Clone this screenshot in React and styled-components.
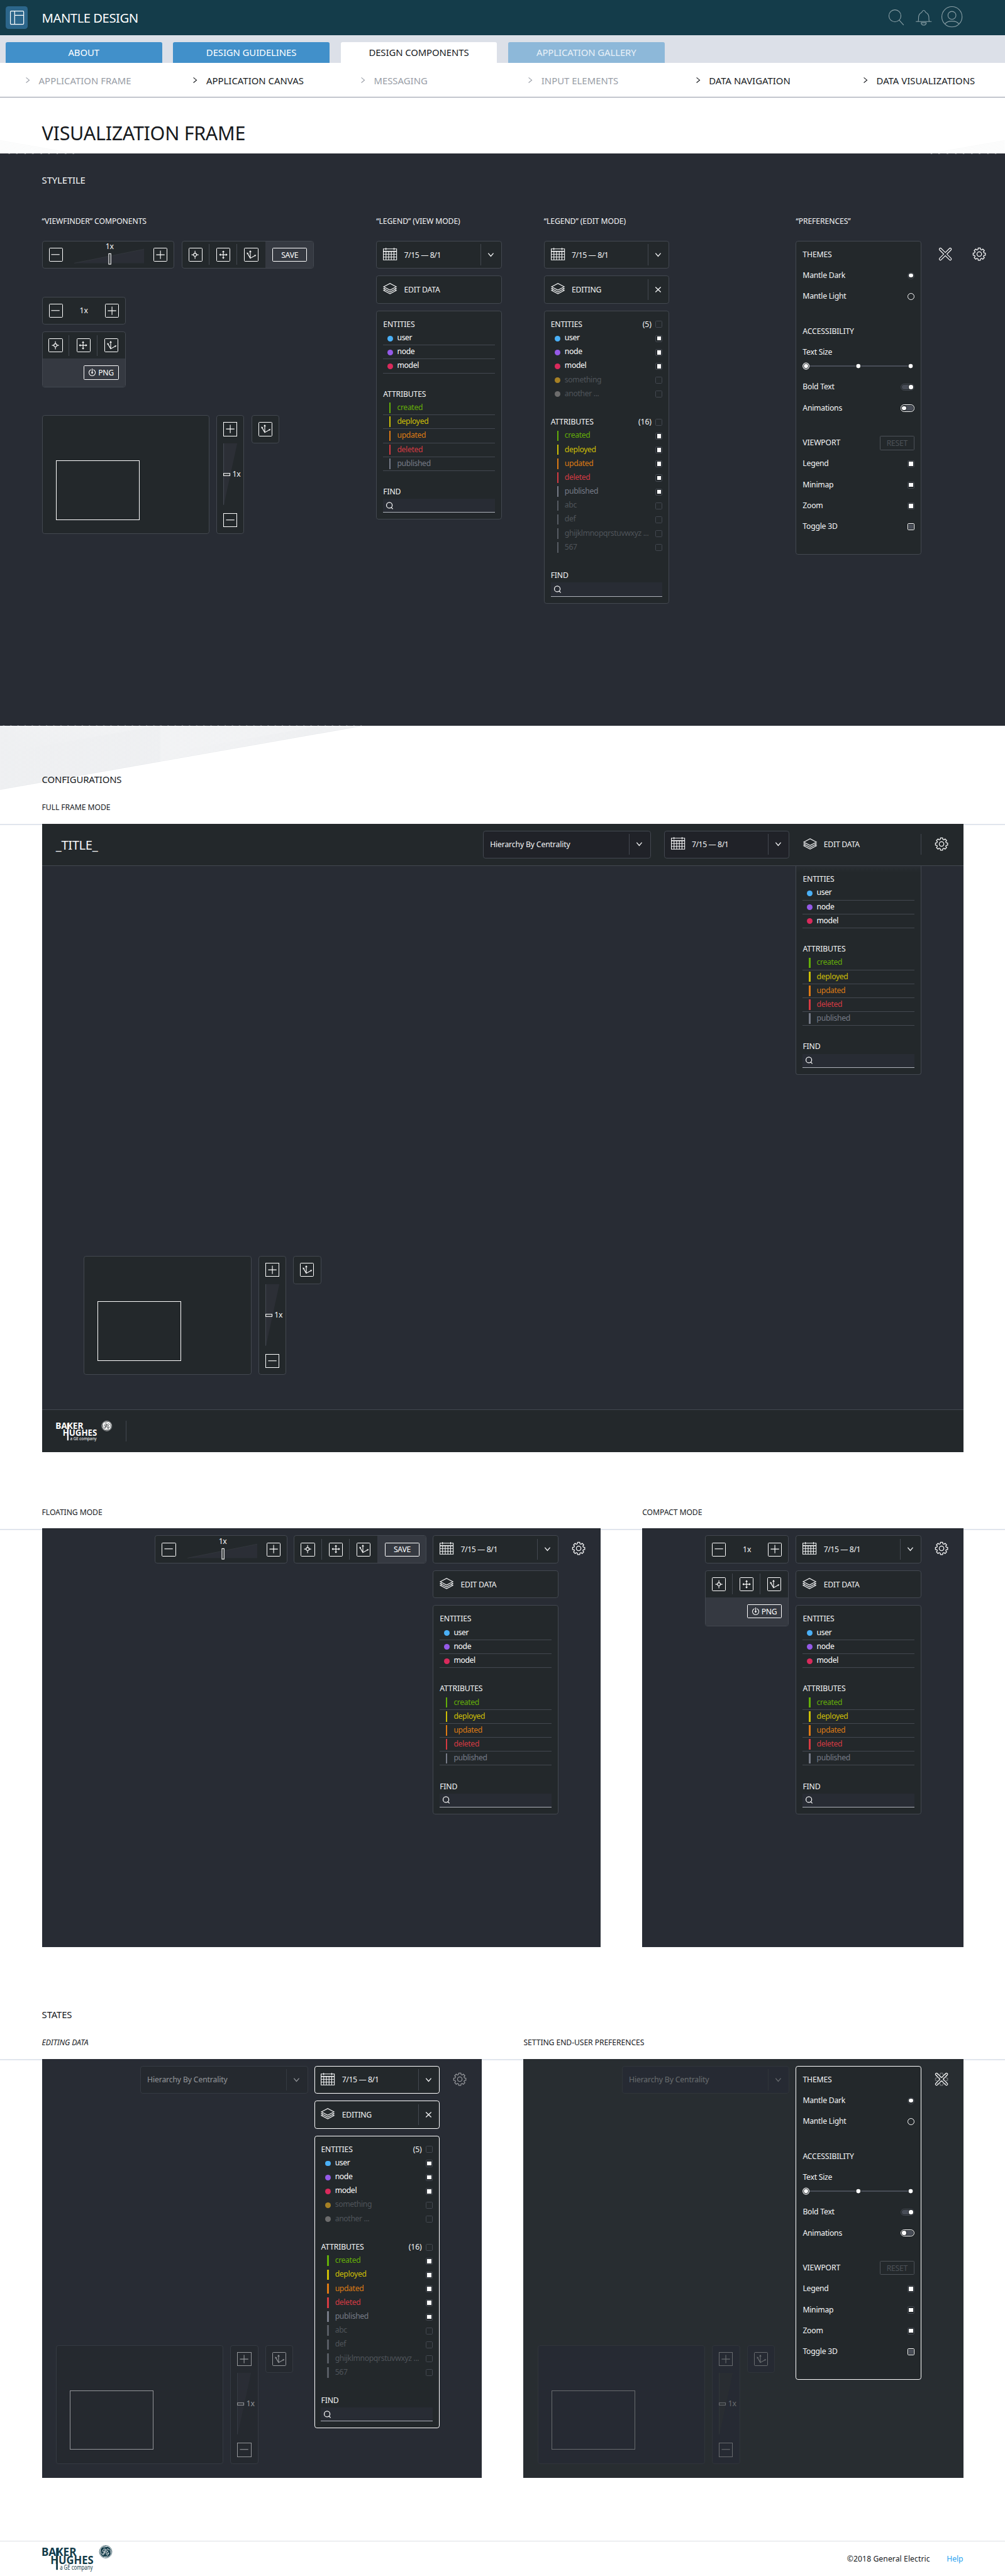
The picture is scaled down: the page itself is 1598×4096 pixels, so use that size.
import React from "react";
import styled, { createGlobalStyle, css } from "styled-components";

/* 1rem is ten units of the 1440-wide layout grid. */
const GlobalStyle = createGlobalStyle`
  html { font-size: 11.1px; }
  body {
    margin: 0;
    overflow-x: hidden;
    background: #fff;
    color: #16191d;
    font-family: "Noto Sans", "Open Sans", sans-serif;
    -webkit-font-smoothing: antialiased;
  }
  *, *::before, *::after { box-sizing: border-box; }
  svg { display: block; overflow: visible; flex: none; }
`;

const CANVAS = "#282c34";
const PANEL = "#23282b";
const LINE = "#434850";
const SLATE = "#484d57";

/* ---------- icons ---------- */

const Icon = styled.svg.attrs((p) => ({
  fill: "none",
  stroke: "currentColor",
  strokeWidth: p.strokeWidth || 1,
}))`
  width: ${(p) => p.$w / 10}rem;
  height: ${(p) => (p.$h || p.$w) / 10}rem;
`;

const gearPath = (() => {
  const points = [];
  const ring = [[-15, 6.9], [-10.5, 8.9], [10.5, 8.9], [15, 6.9]];
  for (let tooth = 0; tooth < 8; tooth += 1) {
    ring.forEach(([offset, radius]) => {
      const angle = ((tooth * 45 + offset) * Math.PI) / 180;
      points.push(`${(10 + radius * Math.sin(angle)).toFixed(2)} ${(10 - radius * Math.cos(angle)).toFixed(2)}`);
    });
  }
  return `M${points.join("L")}Z`;
})();

const Gear = () => (
  <Icon $w={20} viewBox="0 0 20 20" strokeLinejoin="round" strokeWidth="1.1">
    <path d={gearPath} />
    <circle cx="10" cy="10" r="3.3" />
  </Icon>
);

const BigCross = () => (
  <Icon $w={20} viewBox="-10 -10 20 20">
    <path
      transform="rotate(45)"
      d="M-1.6 -1.6V-10A1.6 1.6 0 0 1 1.6 -10V-1.6H10A1.6 1.6 0 0 1 10 1.6H1.6V10A1.6 1.6 0 0 1 -1.6 10V1.6H-10A1.6 1.6 0 0 1 -10 -1.6Z"
    />
  </Icon>
);

const Calendar = () => (
  <Icon $w={20} $h={18} viewBox="0 0 20 18">
    <path d="M.5 1.6H19.5V17.4H.5ZM4.2 0V3.4M15.8 0V3.4M.5 9.3H19.5M.5 13.3H19.5M4.3 5.3V17.4M8.1 5.3V17.4M11.9 5.3V17.4M15.7 5.3V17.4" />
    <path d="M.5 5.2H19.5" strokeWidth="1.5" />
  </Icon>
);

const Layers = () => (
  <Icon $w={20} $h={16} viewBox="0 0 20 16">
    <path d="M.9 5.4L10 .6L19.1 5.4L10 10.2ZM3.6 6.8L.9 8.1L10 12.9L19.1 8.1L16.4 6.8M3.6 9.4L.9 10.6L10 15.4L19.1 10.6L16.4 9.4" />
  </Icon>
);

const Chevron = () => (
  <Icon $w={8} $h={6} viewBox="0 0 8 6" strokeWidth="1.2"><path d="M.3 .5L4 5L7.7 .5" /></Icon>
);

const Cross = () => (
  <Icon $w={8} viewBox="0 0 8 8" strokeWidth="1.2"><path d="M.2 .4L7.8 7.6M7.8 .4L.2 7.6" /></Icon>
);

const Magnifier = () => (
  <Icon $w={10} $h={11} viewBox="0 0 10 11" strokeWidth="1.1">
    <circle cx="4.6" cy="4.9" r="4.1" />
    <path d="M6.9 7.6L9.6 10.2" />
  </Icon>
);

const glyphs = {
  plus: <path d="M4 10H16M10 4V16" />,
  minus: <path d="M4 9.7H16" />,
  target: <><circle cx="10" cy="10" r="2.2" /><path d="M10 4.2V7.8M10 12.2V15.8M5 10H7.8M12.2 10H15" /></>,
  pan: (
    <>
      <path d="M10 5V15M5 10H15" />
      <path fill="currentColor" stroke="none" d="M10 4L11.8 6.2H8.2ZM10 16L11.8 13.8H8.2ZM4 10L6.2 8.2V11.8ZM16 10L13.8 8.2V11.8Z" />
    </>
  ),
  axes: (
    <>
      <path d="M9 5V15L16 11M9 15L5 8" />
      <path fill="currentColor" stroke="none" d="M9 3.7L10.8 6H7.2ZM17.4 10.1L16.1 12.6L14.6 10.3ZM4.1 6.6L6.7 7.8L4.2 9.4Z" />
    </>
  ),
};

/* ---------- shared controls ---------- */

const Box = styled.span`
  display: block;
  width: 2rem;
  height: 2rem;
  flex: none;
  border: 0.1rem solid #fff;
  border-radius: ${(p) => (p.$square ? 0 : "0.15rem")};
  color: #fff;
`;

const BoxGlyph = styled(Icon)`margin: -0.1rem;`;

const BoxButton = ({ glyph, square }) => (
  <Box $square={square}><BoxGlyph $w={20} viewBox="0 0 20 20">{glyphs[glyph]}</BoxGlyph></Box>
);

const Panel = styled.div`
  border: 0.1rem solid ${(p) => (p.$active ? "#fff" : LINE)};
  border-radius: 0.35rem;
  background: ${(p) => (p.$active ? PANEL : p.$inset ? "#202228" : `var(--panel, ${PANEL})`)};
  color: #f5f6f7;
  font-size: 1.1rem;
`;

const Bar = styled(Panel)`
  display: flex;
  align-items: center;
  width: ${(p) => p.$w / 10}rem;
  height: 4rem;
  flex: none;
`;

const ZoomBar = styled(Bar)`padding: 0 0.9rem; justify-content: space-between;`;

const Track = styled.div`
  position: relative;
  margin: 0 1.4rem 0 1.6rem;
`;

const TrackLabel = styled.span`
  position: absolute;
  left: 0;
  right: -0.2rem;
  top: -0.8rem;
  line-height: 1.2rem;
  text-align: center;
  letter-spacing: -0.02em;
`;

const WideZoom = () => (
  <ZoomBar $w={190}>
    <BoxButton glyph="minus" />
    <Track>
      <TrackLabel>1x</TrackLabel>
      <Icon $w={100} $h={20} viewBox="0 0 100 20">
        <path d="M0 22L100 2V22Z" fill="#2b2e36" stroke="none" />
        <path d="M0 22L100 2" stroke="#383d42" strokeWidth="0.6" />
        <rect x="49.5" y="8.5" width="3" height="15" fill={PANEL} stroke="#fff" />
      </Icon>
    </Track>
    <BoxButton glyph="plus" />
  </ZoomBar>
);

const SmallZoom = () => (
  <ZoomBar $w={120}>
    <BoxButton glyph="minus" />
    <span>1x</span>
    <BoxButton glyph="plus" />
  </ZoomBar>
);

const ToolCells = styled.div`
  display: flex;
  height: 3.8rem;
  margin-left: -0.1rem;
`;

const ToolCell = styled.div`
  display: flex;
  align-items: center;
  justify-content: center;
  width: 4rem;
  ${(p) => !p.$last && css`
    background: linear-gradient(${LINE}, ${LINE}) right center / 0.1rem 3rem no-repeat;
  `}
`;

const Tools = () => (
  <ToolCells>
    <ToolCell><BoxButton glyph="target" /></ToolCell>
    <ToolCell><BoxButton glyph="pan" /></ToolCell>
    <ToolCell $last><BoxButton glyph="axes" /></ToolCell>
  </ToolCells>
);

const ExportTray = styled.div`
  display: flex;
  flex: 1;
  align-items: center;
  justify-content: flex-end;
  height: ${(p) => (p.$tall ? "4rem" : "100%")};
  padding-right: 0.9rem;
  background: #353941;
`;

const OutlineButton = styled.span`
  display: flex;
  align-items: center;
  justify-content: center;
  gap: 0.35rem;
  width: 5rem;
  height: 2rem;
  border: 0.1rem solid ${(p) => (p.$muted ? "#4d5258" : "#fff")};
  border-radius: 0.15rem;
  color: ${(p) => (p.$muted ? "#4d5258" : "#fff")};
  letter-spacing: -0.02em;
`;

const ToolBar = styled(Bar)`overflow: hidden;`;
const ToolStack = styled(Panel)`
  width: 12rem;
  height: 8rem;
  overflow: hidden;
`;

const WideTools = () => (
  <ToolBar $w={190}>
    <Tools />
    <ExportTray><OutlineButton>SAVE</OutlineButton></ExportTray>
  </ToolBar>
);

const SmallTools = () => (
  <ToolStack>
    <Tools />
    <ExportTray $tall>
      <OutlineButton>
        <Icon $w={10} $h={11} viewBox="0 0 10 11">
          <path d="M3.4 1.5A4.6 4.6 0 1 0 6.6 1.5M5 0V6" />
          <path d="M3.2 5.2H6.8L5 7.8Z" fill="currentColor" stroke="none" />
        </Icon>
        PNG
      </OutlineButton>
    </ExportTray>
  </ToolStack>
);

/* ---------- minimap ---------- */

const Navigator = styled.div`
  display: flex;
  align-items: flex-start;
  gap: 1rem;
`;

const Minimap = styled(Panel)`
  width: 24rem;
  height: 17rem;
  padding: 6.4rem 0 0 1.9rem;
`;

const Viewport = styled.div`
  width: 12rem;
  height: 8.5rem;
  border: 0.1rem solid #fff;
`;

const ZoomColumn = styled(Panel)`
  display: flex;
  flex-direction: column;
  align-items: center;
  justify-content: space-between;
  width: 4rem;
  height: 17rem;
  padding: 0.9rem 0;
`;

const ColumnTrack = styled.div`position: relative;`;
const ColumnLabel = styled.span`
  position: absolute;
  left: 1.3rem;
  top: 3.6rem;
  line-height: 1.6rem;
  letter-spacing: -0.02em;
`;

const AxesPanel = styled(Panel)`
  display: grid;
  place-items: center;
  width: 4rem;
  height: 4rem;
`;

const MapControls = () => (
  <Navigator>
    <Minimap><Viewport /></Minimap>
    <ZoomColumn>
      <BoxButton glyph="plus" square />
      <ColumnTrack>
        <Icon $w={20} $h={90} viewBox="0 0 20 90">
          <path d="M0 0H20L.5 90Z" fill="#2c2f36" stroke="none" />
          <path d="M.5 0V88" stroke={LINE} />
          <rect x=".5" y="43" width="9" height="3.2" fill={PANEL} stroke="#fff" />
        </Icon>
        <ColumnLabel>1x</ColumnLabel>
      </ColumnTrack>
      <BoxButton glyph="minus" square />
    </ZoomColumn>
    <AxesPanel><BoxButton glyph="axes" /></AxesPanel>
  </Navigator>
);

/* ---------- drop-downs and legend ---------- */

const BarText = styled.span`
  flex: 1;
  padding-left: ${(p) => (p.$plain ? 0 : "1rem")};
  letter-spacing: ${(p) => p.$track || "-0.02em"};
  white-space: nowrap;
`;

const BarEnd = styled.span`
  display: grid;
  place-items: center;
  width: 3rem;
  height: 3rem;
  padding-right: 0.1rem;
  border-left: 0.1rem solid ${LINE};
`;

const DropBar = styled(Bar)`padding-left: 0.9rem;`;

const IconNudge = styled.span`
  display: block;
  margin-top: -0.25rem;
`;

const DateBar = (props) => (
  <DropBar $w={180} {...props}>
    <IconNudge><Calendar /></IconNudge>
    <BarText $track="-0.033em">7/15 — 8/1</BarText>
    <BarEnd><Chevron /></BarEnd>
  </DropBar>
);

const SelectBar = (props) => (
  <DropBar $w={240} {...props}>
    <BarText $plain $track="-0.012em">Hierarchy By Centrality</BarText>
    <BarEnd><Chevron /></BarEnd>
  </DropBar>
);

const EditBar = ({ editing, active }) => (
  <DropBar $w={180} $active={active}>
    <IconNudge><Layers /></IconNudge>
    <BarText>{editing ? "EDITING" : "EDIT DATA"}</BarText>
    {editing && <BarEnd><Cross /></BarEnd>}
  </DropBar>
);

const LegendPanel = styled(Panel)`
  width: 18rem;
  padding: 0.9rem;
  ${(p) => p.$docked && css`
    border-top: 0;
    border-radius: 0 0 0.35rem 0.35rem;
    background: linear-gradient(#292d33, ${PANEL} 0.9rem);
  `}
`;

const LegendHead = styled.div`
  display: flex;
  height: 2rem;
  line-height: 1.9rem;
  letter-spacing: -0.012em;
`;

const Count = styled.span`
  margin-left: auto;
  padding-right: 0.6rem;
`;

const LegendRow = styled.div`
  display: flex;
  height: 2rem;
  border-bottom: ${(p) => (p.$ruled ? `0.1rem solid ${LINE}` : "0")};
  color: ${(p) => p.$color};
  line-height: 1.85rem;
  letter-spacing: -0.03em;
  white-space: nowrap;
`;

const Dot = styled.i`
  width: 0.8rem;
  height: 0.8rem;
  margin: 0.6rem 0.6rem 0 0.6rem;
  border-radius: 50%;
  background: ${(p) => p.$color};
`;

const Stripe = styled.i`
  width: 0.2rem;
  height: 1.5rem;
  margin: 0.2rem 0.9rem 0 0.9rem;
  background: ${(p) => p.$color};
`;

const Check = styled.i`
  display: block;
  width: 1rem;
  height: 1rem;
  flex: none;
  margin: ${(p) => (p.$inRow ? "0.5rem 0 0 auto" : 0)};
  padding: 0.1rem;
  border: 0.1rem solid ${(p) => (p.$bright ? "#fff" : LINE)};
  border-radius: ${(p) => (p.$round ? "50%" : "0.15rem")};
  &::before {
    content: "";
    display: block;
    width: 0.6rem;
    height: 0.6rem;
    border-radius: ${(p) => (p.$round ? "50%" : 0)};
    background: ${(p) => p.$fill || "transparent"};
  }
`;

const HeadCheck = styled(Check)`margin: 0.5rem 0 0;`;

const Gap = styled.div`height: ${(p) => p.$h / 10}rem;`;

const SearchField = styled.div`
  height: 2rem;
  padding: 0.4rem 0 0 0.45rem;
  border-bottom: 0.1rem solid #aeb2ba;
  background: ${CANVAS};
  color: #fff;
`;

const DIM = "#4f545a";
const entities = [["user", "#4ab0f7"], ["node", "#955ae8"], ["model", "#d92a5c"]];
const moreEntities = [["something", "#a68024"], ["another ...", "#6c6c6c"]];
const attributes = [
  ["created", "#63ae08"], ["deployed", "#cdbf06"], ["updated", "#de7a14"],
  ["deleted", "#d53a42"], ["published", "#767b87"],
];
const moreAttributes = ["abc", "def", "ghijklmnopqrstuvwxyz ...", "567"];

const Legend = ({ editing, active, docked }) => (
  <LegendPanel $active={active} $docked={docked}>
    <LegendHead>ENTITIES{editing && <><Count>(5)</Count><HeadCheck /></>}</LegendHead>
    {entities.map(([name, color]) => (
      <LegendRow key={name} $ruled={!editing} $color="#fff">
        <Dot $color={color} />{name}{editing && <Check $inRow $fill="#fff" />}
      </LegendRow>
    ))}
    {editing && moreEntities.map(([name, color]) => (
      <LegendRow key={name} $color={DIM}><Dot $color={color} />{name}<Check $inRow /></LegendRow>
    ))}
    <Gap $h={20} />
    <LegendHead>ATTRIBUTES{editing && <><Count>(16)</Count><HeadCheck /></>}</LegendHead>
    {attributes.map(([name, color]) => (
      <LegendRow key={name} $ruled={!editing} $color={color}>
        <Stripe $color={color} />{name}{editing && <Check $inRow $fill="#fff" />}
      </LegendRow>
    ))}
    {editing && moreAttributes.map((name) => (
      <LegendRow key={name} $color={DIM}><Stripe $color="#575c63" />{name}<Check $inRow /></LegendRow>
    ))}
    <Gap $h={20} />
    <LegendHead>FIND</LegendHead>
    <SearchField><Magnifier /></SearchField>
  </LegendPanel>
);

/* ---------- preferences ---------- */

const PrefPanel = styled(Panel)`
  width: 18rem;
  height: 45rem;
  padding: 0.9rem;
`;

const PrefRow = styled.div`
  display: flex;
  align-items: center;
  justify-content: space-between;
  height: 2rem;
  margin-bottom: ${(p) => (p.$tight ? 0 : "1rem")};
`;

const PrefText = styled.span`
  margin-top: -0.15rem;
  letter-spacing: ${(p) => (p.$head ? "-0.012em" : "-0.02em")};
`;

const Pill = styled.i`
  display: flex;
  justify-content: ${(p) => (p.$on ? "flex-end" : "flex-start")};
  width: 2rem;
  height: 1rem;
  padding: 0.1rem;
  border: 0.1rem solid ${(p) => (p.$on ? LINE : "#fff")};
  border-radius: 0.5rem;
  background: ${SLATE} content-box;
  &::before {
    content: "";
    width: 0.6rem;
    height: 0.6rem;
    border-radius: 50%;
    background: #fff;
    box-shadow: 0 0 0 0.1rem ${PANEL};
  }
`;

const SizeSlider = () => (
  <Icon $w={160} $h={20} viewBox="0 0 160 20">
    <path d="M10 10H76M84 10H151" stroke={SLATE} strokeWidth="1.8" />
    <circle cx="5" cy="10" r="4.5" />
    <g fill="#fff" stroke="none"><circle cx="5" cy="10" r="3" /><circle cx="80" cy="10" r="3" /><circle cx="155" cy="10" r="3" /></g>
  </Icon>
);

const Preferences = ({ active }) => (
  <PrefPanel $active={active}>
    <PrefRow><PrefText $head>THEMES</PrefText></PrefRow>
    <PrefRow><PrefText>Mantle Dark</PrefText><Check $round $fill="#fff" /></PrefRow>
    <PrefRow><PrefText>Mantle Light</PrefText><Check $round $bright /></PrefRow>
    <Gap $h={20} />
    <PrefRow><PrefText $head>ACCESSIBILITY</PrefText></PrefRow>
    <PrefRow $tight><PrefText>Text Size</PrefText></PrefRow>
    <PrefRow><SizeSlider /></PrefRow>
    <PrefRow><PrefText>Bold Text</PrefText><Pill $on /></PrefRow>
    <PrefRow><PrefText>Animations</PrefText><Pill /></PrefRow>
    <Gap $h={20} />
    <PrefRow><PrefText $head>VIEWPORT</PrefText><OutlineButton $muted>RESET</OutlineButton></PrefRow>
    <PrefRow><PrefText>Legend</PrefText><Check $fill="#fff" /></PrefRow>
    <PrefRow><PrefText>Minimap</PrefText><Check $fill="#fff" /></PrefRow>
    <PrefRow><PrefText>Zoom</PrefText><Check $fill="#fff" /></PrefRow>
    <PrefRow><PrefText>Toggle 3D</PrefText><Check $bright $fill={SLATE} /></PrefRow>
  </PrefPanel>
);

/* ---------- brand ---------- */

const BrandLogo = ({ width, color, ground }) => (
  <Icon $w={width} $h={width * 0.375} viewBox="0 0 100 37.5" fontFamily="Noto Sans">
    <g fill={color} stroke="none">
      <text x="-1" y="15" fontSize="15.3" fontWeight="700" textLength="50" lengthAdjust="spacingAndGlyphs">BAKER</text>
      <text x="12" y="27.3" fontSize="15.3" fontWeight="700" textLength="61.6" lengthAdjust="spacingAndGlyphs">HUGHES</text>
      <text x="25.4" y="35.2" fontSize="9" textLength="47.2" lengthAdjust="spacingAndGlyphs">a GE company</text>
      <rect x="20" y="4" width="2.5" height="31.3" />
      <circle cx="91" cy="9.4" r="8" />
    </g>
    <g stroke={color} fill="none" strokeWidth="0.6"><circle cx="91" cy="9.4" r="9" /></g>
    <g stroke={ground} fill="none" strokeWidth="0.9" strokeLinecap="round">
      <path d="M90.6 5.6C88.6 4.7 86.4 7 86.9 8.9C87.4 10.5 90 8.6 90.8 6.2C90 9 89.4 12 88 13.6C86.8 14.9 85.6 13.2 87.2 11.8C88.6 10.6 90.2 10.6 91 9.8" />
      <path d="M95.3 6.6C95.3 4.6 93 4.6 92.5 6.8C92.2 8.4 93 9.2 94.2 8.8C91.6 8.8 90.8 14 93.4 13.8C95.2 13.6 96.2 11 94.8 10.8C94 10.8 93.6 11.8 94 12.4" />
      <path d="M83.6 7.2C84 9.6 84 11 85.4 12.6M98.4 11.6C98 9.2 98 7.8 96.6 6.2M88.8 16.8C91.2 16.4 92.6 16.4 94.2 15M93.2 2C90.8 2.4 89.4 2.4 87.8 3.8" strokeWidth="0.7" />
    </g>
  </Icon>
);

/* ---------- page chrome ---------- */

const TopBar = styled.header`
  display: flex;
  align-items: center;
  height: 5rem;
  padding: 0 6.1rem 0 0.8rem;
  background: #143c4a;
`;

const AppTile = styled.div`
  display: grid;
  place-items: center;
  width: 3.2rem;
  height: 3.2rem;
  margin-right: 2rem;
  border-radius: 0.4rem;
  background: #2c668b;
  color: #fff;
`;

const AppName = styled.div`
  flex: 1;
  color: #fff;
  font-size: 1.83rem;
  letter-spacing: -0.025em;
`;

const TopIcons = styled.div`
  display: flex;
  align-items: center;
  color: #8ba0a7;
`;

const SearchSlot = styled.span`margin-right: 1.7rem;`;
const BellSlot = styled.span`margin-right: 1.4rem;`;
const AvatarSlot = styled.span`margin-top: -0.2rem;`;

const TabStrip = styled.nav`
  display: flex;
  align-items: flex-end;
  gap: 1.6rem;
  height: 4rem;
  padding: 0 0.8rem;
  background: #dce0e8;
`;

const tabTones = {
  idle: css`background: #4190ca; color: #fff;`,
  current: css`background: #fff; color: #16191d;`,
  faded: css`background: #8db8d9; color: #e9f1f8;`,
};

const Tab = styled.div`
  width: 22.4rem;
  height: 3rem;
  border-radius: 0.25rem 0.25rem 0 0;
  font-size: 1.34rem;
  line-height: 3rem;
  letter-spacing: -0.005em;
  text-align: center;
  ${(p) => tabTones[p.$tone]}
`;

const SubNav = styled.nav`
  display: grid;
  grid-template-columns: repeat(6, 24rem);
  height: 5rem;
  overflow: hidden;
  border-bottom: 0.1rem solid #9096a4;
`;

const SubLink = styled.div`
  display: flex;
  align-items: center;
  gap: 1.25rem;
  height: 5rem;
  padding-left: 3.7rem;
  color: ${(p) => (p.$on ? "#16191d" : "#989da6")};
  font-size: 1.34rem;
  letter-spacing: 0.002em;
  white-space: nowrap;
`;

const PageHead = styled.div`
  position: relative;
  height: 8rem;
  padding: 3rem 6rem 0;
  font-size: 2.75rem;
  line-height: 4rem;
  letter-spacing: -0.01em;
`;

const Backdrop = styled.svg`
  position: absolute;
  ${(p) => (p.$right ? "right: 0;" : "left: 0;")}
  ${(p) => (p.$bottom ? "bottom: 0;" : "top: 0;")}
  width: ${(p) => p.$w / 10}rem;
  height: ${(p) => p.$h / 10}rem;
`;

const stripes = (count, step, rise) =>
  Array.from({ length: count }, (_, i) => {
    const y = (i + 0.6) * step;
    return `M0 ${y.toFixed(3)}L${(y / rise).toFixed(2)} 0`;
  }).join("");

const SectionTitle = styled.h2`
  position: relative;
  height: 2rem;
  margin: 0;
  font-size: 1.34rem;
  font-weight: 400;
  line-height: 2rem;
  letter-spacing: -0.008em;
`;

const Label = styled.h3`
  height: 2rem;
  margin: 0;
  font-size: 1.1rem;
  font-weight: 400;
  font-style: ${(p) => (p.$italic ? "italic" : "normal")};
  line-height: 2rem;
  letter-spacing: -0.008em;
  white-space: nowrap;
`;

const StyleTile = styled.section`
  height: 82rem;
  padding: 2.8rem 6rem 0;
  background: ${CANVAS};
  color: #f5f6f7;
`;

const TileColumns = styled.div`
  display: grid;
  grid-template-columns: 47.9rem 24rem 36.1rem 30rem;
  margin-top: 3.9rem;
`;

const Stack = styled.div`
  display: flex;
  flex-direction: column;
  align-items: ${(p) => p.$align || "flex-start"};
  gap: ${(p) => (p.$gap ?? 10) / 10}rem;
  ${(p) => p.$top && css`margin-top: ${p.$top / 10}rem;`}
`;

const Line = styled.div`
  display: flex;
  align-items: flex-start;
  gap: ${(p) => (p.$gap ?? 10) / 10}rem;
`;

const GearCell = styled.div`
  display: grid;
  justify-items: center;
  width: ${(p) => (p.$w || 60) / 10}rem;
  flex: none;
  padding: 0.9rem 0.3rem 0 0;
  color: #fff;
`;

const Layered = styled.div`
  display: grid;
  & > * { grid-area: 1 / 1; }
`;

const Section = styled.section`
  position: relative;
  padding-top: ${(p) => p.$top / 10}rem;
`;

const Inset = styled.div`padding-left: 6rem;`;

const Labels = styled.div`
  display: grid;
  grid-template-columns: ${(p) => p.$cols};
  padding: ${(p) => p.$top / 10}rem 6rem 1.3rem;
`;

const FrameRow = styled.div`
  display: grid;
  grid-template-columns: ${(p) => p.$cols};
  padding: 0 6rem;
  border-top: 0.2rem solid #e1e6ed;
`;

const Frame = styled.div`
  position: relative;
  display: flex;
  width: ${(p) => p.$w / 10}rem;
  height: ${(p) => p.$h / 10}rem;
  margin-top: -0.2rem;
  background: ${(p) => p.$ground || CANVAS};
  flex-direction: ${(p) => (p.$column ? "column" : "row")};
  padding-top: ${(p) => (p.$column ? 0 : "1rem")};
`;

const Workspace = styled.div`
  display: flex;
  flex: 1;
  flex-direction: column;
  justify-content: space-between;
  padding: 0 0 2rem 2rem;
`;

const RightAligned = styled.div`
  display: flex;
  justify-content: flex-end;
  gap: 0.9rem;
  padding-right: ${(p) => (p.$pad ?? 9) / 10}rem;
`;

const Faded = styled.div`
  opacity: ${(p) => p.$level};
  ${(p) => p.$fill && css`--panel: ${p.$fill};`}
`;

/* ---------- full frame ---------- */

const FrameHeader = styled.div`
  display: flex;
  height: 6.1rem;
  padding-top: 1rem;
  border-bottom: 0.1rem solid ${LINE};
  background: ${PANEL};
  color: #f5f6f7;
`;

const FrameTitle = styled.div`
  flex: 1;
  padding-left: 2rem;
  font-size: 1.83rem;
  line-height: 4.1rem;
  letter-spacing: -0.02em;
`;

const HeaderEdit = styled.div`
  display: flex;
  align-items: center;
  width: 17rem;
  height: 3rem;
  margin-top: 0.5rem;
  border-right: 0.1rem solid ${LINE};
  font-size: 1.1rem;
`;

const FrameBody = styled.div`
  display: flex;
  flex: 1;
  justify-content: space-between;
  align-items: flex-start;
  padding: 0 6rem;
`;

const MapDock = styled.div`
  align-self: flex-end;
  padding-bottom: 4.95rem;
`;

const FrameFooter = styled.div`
  display: flex;
  align-items: center;
  height: 6.1rem;
  padding-left: 2rem;
  border-top: 0.1rem solid ${LINE};
  background: ${PANEL};
`;

const FooterRule = styled.i`
  width: 0.1rem;
  height: 3rem;
  margin-left: 2rem;
  background: ${LINE};
`;

const PageFooter = styled.footer`
  display: flex;
  justify-content: space-between;
  height: 5rem;
  margin-top: 9rem;
  padding: 0.6rem 6rem 0;
  border-top: 0.1rem solid #dce0e4;
  font-size: 1.1rem;
`;

const FooterText = styled.div`
  display: flex;
  gap: 2.4rem;
  line-height: 4rem;
  letter-spacing: -0.01em;
`;

const Copyright = styled.span`letter-spacing: 0.005em;`;
const HelpLink = styled.a`color: #2aa3ef;`;

export default function App() {
  return (
    <>
      <GlobalStyle />
      <TopBar>
        <AppTile>
          <Icon $w={20} viewBox="0 0 20 20" strokeWidth="1.1">
            <rect x=".5" y=".5" width="19" height="19" rx="1.2" />
            <path d="M6.6 .5V19.5M6.6 6.7H19.5" />
          </Icon>
        </AppTile>
        <AppName>MANTLE DESIGN</AppName>
        <TopIcons>
          <SearchSlot>
            <Icon $w={22} $h={23} viewBox="0 0 22 23"><circle cx="9" cy="9.2" r="8.6" /><path d="M15.2 15.4L21.5 22.4" /></Icon>
          </SearchSlot>
          <BellSlot>
            <Icon $w={23} $h={22} viewBox="0 0 23 22">
              <path d="M.2 16.5H22.8M3.6 16.3C4.3 14.6 4 13 4.1 10.6C4.2 6.6 6 4.6 8.6 3.4C9.2 2.4 9.6 .4 11.5 .4C13.4 .4 13.8 2.4 14.4 3.4C17 4.6 18.8 6.6 18.9 10.6C19 13 18.7 14.6 19.4 16.3M7.9 18.1H15.1C15.1 20.2 13.6 21.6 11.5 21.6C9.4 21.6 7.9 20.2 7.9 18.1Z" />
            </Icon>
          </BellSlot>
          <AvatarSlot>
            <Icon $w={30} viewBox="0 0 30 30"><circle cx="15" cy="15" r="14.5" /><circle cx="15" cy="13" r="5.7" /><path d="M5 25.5C6.8 22.6 10 21.3 15 21.3C20 21.3 23.2 22.6 25 25.5" /></Icon>
          </AvatarSlot>
        </TopIcons>
      </TopBar>
      <TabStrip>
        <Tab $tone="idle">ABOUT</Tab>
        <Tab $tone="idle">DESIGN GUIDELINES</Tab>
        <Tab $tone="current">DESIGN COMPONENTS</Tab>
        <Tab $tone="faded">APPLICATION GALLERY</Tab>
      </TabStrip>
      <SubNav>
        {[["APPLICATION FRAME"], ["APPLICATION CANVAS", 1], ["MESSAGING"], ["INPUT ELEMENTS"], ["DATA NAVIGATION", 1], ["DATA VISUALIZATIONS", 1]].map(([name, on]) => (
          <SubLink key={name} $on={on}>
            <Icon $w={6} $h={8} viewBox="0 0 6 8"><path d="M.5 .3L5 4L.5 7.7" /></Icon>
            {name}
          </SubLink>
        ))}
      </SubNav>
      <PageHead>
        <Backdrop $bottom $w={106} $h={19} viewBox="0 0 106 19" fill="none" stroke="#f7f8f8" strokeWidth="0.9">
          <path d="M0 .6L106 19M0 2.6L95 19M0 4.6L83 19M0 6.6L71 19M0 8.6L60 19M0 10.6L48 19M0 12.6L37 19M0 14.6L25 19M0 16.6L14 19" />
        </Backdrop>
        <Backdrop $bottom $right $w={106} $h={19} viewBox="0 0 106 19" fill="none" stroke="#f7f8f8" strokeWidth="0.9">
          <path d="M106 .6L0 19M106 2.6L11 19M106 4.6L23 19M106 6.6L35 19M106 8.6L46 19M106 10.6L58 19M106 12.6L69 19M106 14.6L81 19M106 16.6L92 19" />
        </Backdrop>
        VISUALIZATION FRAME
      </PageHead>

      <StyleTile>
        <SectionTitle>STYLETILE</SectionTitle>
        <TileColumns>
          <div>
            <Label>“VIEWFINDER” COMPONENTS</Label>
            <Stack $top={18} $gap={40}>
              <Line><WideZoom /><WideTools /></Line>
              <Stack><SmallZoom /><SmallTools /></Stack>
              <MapControls />
            </Stack>
          </div>
          <div>
            <Label>“LEGEND” (VIEW MODE)</Label>
            <Stack $top={18}><DateBar /><EditBar /><Legend /></Stack>
          </div>
          <div>
            <Label>“LEGEND” (EDIT MODE)</Label>
            <Stack $top={18}><DateBar /><EditBar editing /><Legend editing /></Stack>
          </div>
          <div>
            <Label>“PREFERENCES”</Label>
            <Stack $top={18}>
              <Line $gap={0}>
                <Preferences />
                <GearCell $w={71}><BigCross /></GearCell>
                <GearCell $w={27}><Gear /></GearCell>
              </Line>
            </Stack>
          </div>
        </TileColumns>
      </StyleTile>

      <Section $top={66}>
        <Backdrop $w={526} $h={93} viewBox="0 0 526 93" fill="none" stroke="#e5e7ea" strokeWidth="1.05">
          <path d={stripes(51, 1.8018, 0.176)} />
        </Backdrop>
        <Inset><SectionTitle>CONFIGURATIONS</SectionTitle></Inset>
        <Labels $top={21} $cols="1fr"><Label>FULL FRAME MODE</Label></Labels>
        <FrameRow $cols="132rem">
          <Frame $w={1320} $h={900} $column>
            <FrameHeader>
              <FrameTitle>_TITLE_</FrameTitle>
              <Line $gap={19}>
                <SelectBar $inset />
                <DateBar $inset />
                <HeaderEdit>
                  <IconNudge><Layers /></IconNudge>
                  <BarText>EDIT DATA</BarText>
                </HeaderEdit>
              </Line>
              <GearCell><Gear /></GearCell>
            </FrameHeader>
            <FrameBody>
              <MapDock><MapControls /></MapDock>
              <Legend docked />
            </FrameBody>
            <FrameFooter>
              <BrandLogo width={80} color="#fff" ground={PANEL} />
              <FooterRule />
            </FrameFooter>
          </Frame>
        </FrameRow>
      </Section>

      <Section $top={0}>
        <Labels $top={77} $cols="86rem 1fr"><Label>FLOATING MODE</Label><Label>COMPACT MODE</Label></Labels>
        <FrameRow $cols="86rem 46rem">
          <Frame $w={800} $h={600}>
            <Workspace><RightAligned><WideZoom /><WideTools /></RightAligned></Workspace>
            <Stack><DateBar /><EditBar /><Legend /></Stack>
            <GearCell><Gear /></GearCell>
          </Frame>
          <Frame $w={460} $h={600}>
            <Workspace>
              <RightAligned $pad={10}><Stack><SmallZoom /><SmallTools /></Stack></RightAligned>
            </Workspace>
            <Stack><DateBar /><EditBar /><Legend /></Stack>
            <GearCell><Gear /></GearCell>
          </Frame>
        </FrameRow>
      </Section>

      <Section $top={86}>
        <Inset><SectionTitle>STATES</SectionTitle></Inset>
        <Labels $top={21} $cols="69rem 1fr"><Label $italic>EDITING DATA</Label><Label>SETTING END-USER PREFERENCES</Label></Labels>
        <FrameRow $cols="69rem 63rem">
          <Frame $w={630} $h={600}>
            <Workspace>
              <Faded $level={0.5}><RightAligned><SelectBar /></RightAligned></Faded>
              <Faded $level={0.5}><MapControls /></Faded>
            </Workspace>
            <Stack><DateBar $active /><EditBar editing active /><Legend editing active /></Stack>
            <Faded $level={0.5}><GearCell><Gear /></GearCell></Faded>
          </Frame>
          <Frame $w={630} $h={600} $ground="#282d31">
            <Workspace>
              <Faded $level={0.3} $fill="#222438"><RightAligned><SelectBar /></RightAligned></Faded>
              <Faded $level={0.3} $fill="#222438"><MapControls /></Faded>
            </Workspace>
            <Preferences active />
            <Layered>
              <Faded $level={0.35}><GearCell><Gear /></GearCell></Faded>
              <GearCell><BigCross /></GearCell>
            </Layered>
          </Frame>
        </FrameRow>
      </Section>

      <PageFooter>
        <BrandLogo width={100} color="#143c4a" ground="#fff" />
        <FooterText><Copyright>©2018 General Electric</Copyright><HelpLink>Help</HelpLink></FooterText>
      </PageFooter>
    </>
  );
}
